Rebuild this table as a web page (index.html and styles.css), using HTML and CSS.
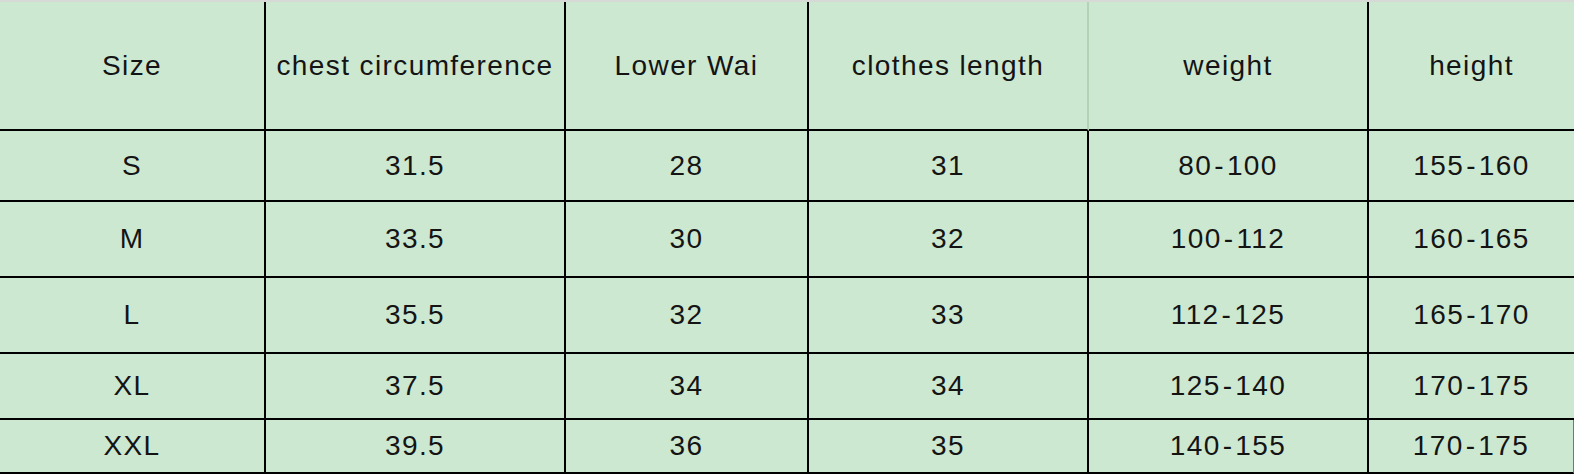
FILE: index.html
```html
<!DOCTYPE html>
<html lang="en">
<head>
<meta charset="utf-8">
<title>Size chart</title>
<link rel="stylesheet" href="styles.css">
</head>
<body>
<div class="chart">
  <div class="cell head">Size</div>
  <div class="cell head">chest circumference</div>
  <div class="cell head">Lower Wai</div>
  <div class="cell head soft">clothes length</div>
  <div class="cell head">weight</div>
  <div class="cell head last">height</div>

  <div class="cell">S</div>
  <div class="cell">31.5</div>
  <div class="cell">28</div>
  <div class="cell">31</div>
  <div class="cell">80<span class="dash">-</span>100</div>
  <div class="cell last">155<span class="dash">-</span>160</div>

  <div class="cell">M</div>
  <div class="cell">33.5</div>
  <div class="cell">30</div>
  <div class="cell">32</div>
  <div class="cell">100<span class="dash">-</span>112</div>
  <div class="cell last">160<span class="dash">-</span>165</div>

  <div class="cell">L</div>
  <div class="cell">35.5</div>
  <div class="cell">32</div>
  <div class="cell">33</div>
  <div class="cell">112<span class="dash">-</span>125</div>
  <div class="cell last">165<span class="dash">-</span>170</div>

  <div class="cell">XL</div>
  <div class="cell">37.5</div>
  <div class="cell">34</div>
  <div class="cell">34</div>
  <div class="cell">125<span class="dash">-</span>140</div>
  <div class="cell last">170<span class="dash">-</span>175</div>

  <div class="cell">XXL</div>
  <div class="cell">39.5</div>
  <div class="cell">36</div>
  <div class="cell">35</div>
  <div class="cell">140<span class="dash">-</span>155</div>
  <div class="cell last edge">170<span class="dash">-</span>175</div>
</div>
</body>
</html>
```
FILE: styles.css
```css
html, body {
  margin: 0;
  padding: 0;
  background: #cde8d1;
}

.chart {
  width: 1574px;
  border-top: 2px solid #d7d9d7;
  display: grid;
  grid-template-columns: 266px 300px 243px 280px 280px 205px;
  grid-template-rows: 129px 71px 76px 76px 66px 54px;
  background: #cde8d1;
  font-family: "Liberation Sans", Arial, sans-serif;
  font-size: 28px;
  letter-spacing: 1.4px;
  color: #141414;
}

.cell {
  box-sizing: border-box;
  display: flex;
  align-items: center;
  justify-content: center;
  white-space: nowrap;
  border-right: 2px solid #000;
  border-bottom: 2px solid #000;
}

.dash {
  padding: 0 2px;
}

.head.soft {
  border-right-color: #b3d2b8;
}

.last {
  border-right: none;
}

.edge {
  border-right: 1px solid #2f9d6a;
}
```
